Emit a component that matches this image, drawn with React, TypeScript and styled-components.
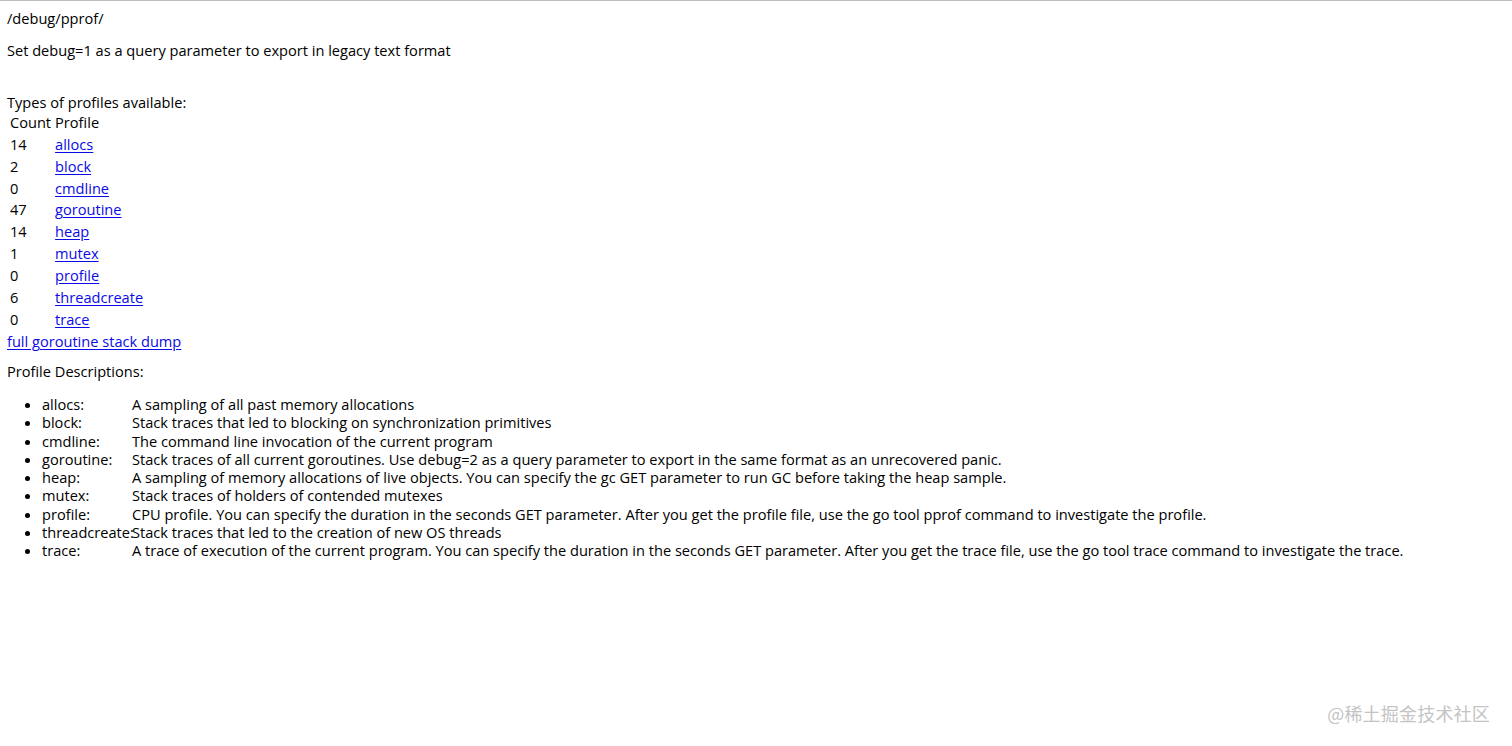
import React from "react";
import styled, { createGlobalStyle } from "styled-components";

const GlobalStyle = createGlobalStyle`
  html, body {
    margin: 0;
    padding: 0;
    background: #ffffff;
  }
  body {
    font-family: "Open Sans", "Noto Sans CJK SC", sans-serif;
    font-size: 14.6px;
    line-height: 18.2px;
    color: #000000;
  }
`;

type Profile = { count: number; name: string; desc: string };

const profiles: Profile[] = [
  { count: 14, name: "allocs", desc: "A sampling of all past memory allocations" },
  { count: 2, name: "block", desc: "Stack traces that led to blocking on synchronization primitives" },
  { count: 0, name: "cmdline", desc: "The command line invocation of the current program" },
  {
    count: 47,
    name: "goroutine",
    desc: "Stack traces of all current goroutines. Use debug=2 as a query parameter to export in the same format as an unrecovered panic.",
  },
  {
    count: 14,
    name: "heap",
    desc: "A sampling of memory allocations of live objects. You can specify the gc GET parameter to run GC before taking the heap sample.",
  },
  { count: 1, name: "mutex", desc: "Stack traces of holders of contended mutexes" },
  {
    count: 0,
    name: "profile",
    desc: "CPU profile. You can specify the duration in the seconds GET parameter. After you get the profile file, use the go tool pprof command to investigate the profile.",
  },
  { count: 6, name: "threadcreate", desc: "Stack traces that led to the creation of new OS threads" },
  {
    count: 0,
    name: "trace",
    desc: "A trace of execution of the current program. You can specify the duration in the seconds GET parameter. After you get the trace file, use the go tool trace command to investigate the trace.",
  },
];

const Page = styled.div`
  position: relative;
  box-sizing: border-box;
  min-height: 100vh;
  border-top: 1px solid #bdbdbd;
  padding: 8px 7px;
`;

const Para = styled.p<{ $top?: number; $bottom?: number }>`
  margin: ${(p) => p.$top ?? 14}px 0 ${(p) => p.$bottom ?? 15}px;
`;

const Table = styled.table`
  border-spacing: 2px;
  border-collapse: separate;
  font-size: inherit;
  line-height: 17.9px;
`;

const Cell = styled.td<{ $width?: number }>`
  padding: 1px;
  vertical-align: middle;
  line-height: 17.9px;
  ${(p) => (p.$width ? `width: ${p.$width}px;` : "")}
`;

const Link = styled.a`
  color: #0a0ae6;
  text-decoration: underline;
  text-underline-offset: 2px;
`;

const List = styled.ul`
  margin: 15px 0 15px;
  padding-left: 35px;
  list-style: disc;
`;

const Item = styled.li`
  white-space: nowrap;
`;

const ProfileName = styled.div`
  display: inline-block;
  width: 90px;
`;

const Watermark = styled.div`
  position: absolute;
  right: 22px;
  top: 699px;
  font-family: "Noto Sans CJK SC", sans-serif;
  font-size: 18px;
  line-height: 26px;
  color: #c4c4c4;
  letter-spacing: 0.2px;
`;

export default function App() {
  return (
    <>
      <GlobalStyle />
      <Page>
        /debug/pprof/
        <br />
        <Para>Set debug=1 as a query parameter to export in legacy text format</Para>
        <br />
        Types of profiles available:
        <Table>
          <thead>
            <tr>
              <Cell $width={40}>Count</Cell>
              <Cell>Profile</Cell>
            </tr>
          </thead>
          <tbody>
            {profiles.map((p) => (
              <tr key={p.name}>
                <Cell>{p.count}</Cell>
                <Cell>
                  <Link href={`${p.name}?debug=1`}>{p.name}</Link>
                </Cell>
              </tr>
            ))}
          </tbody>
        </Table>
        <Link href="goroutine?debug=2">full goroutine stack dump</Link>
        <br />
        <Para $top={12} $bottom={0}>Profile Descriptions:</Para>
        <List>
          {profiles.map((p) => (
            <Item key={p.name}>
              <ProfileName>{p.name}:</ProfileName>
              {p.desc}
            </Item>
          ))}
        </List>
        <Watermark>@稀土掘金技术社区</Watermark>
      </Page>
    </>
  );
}
